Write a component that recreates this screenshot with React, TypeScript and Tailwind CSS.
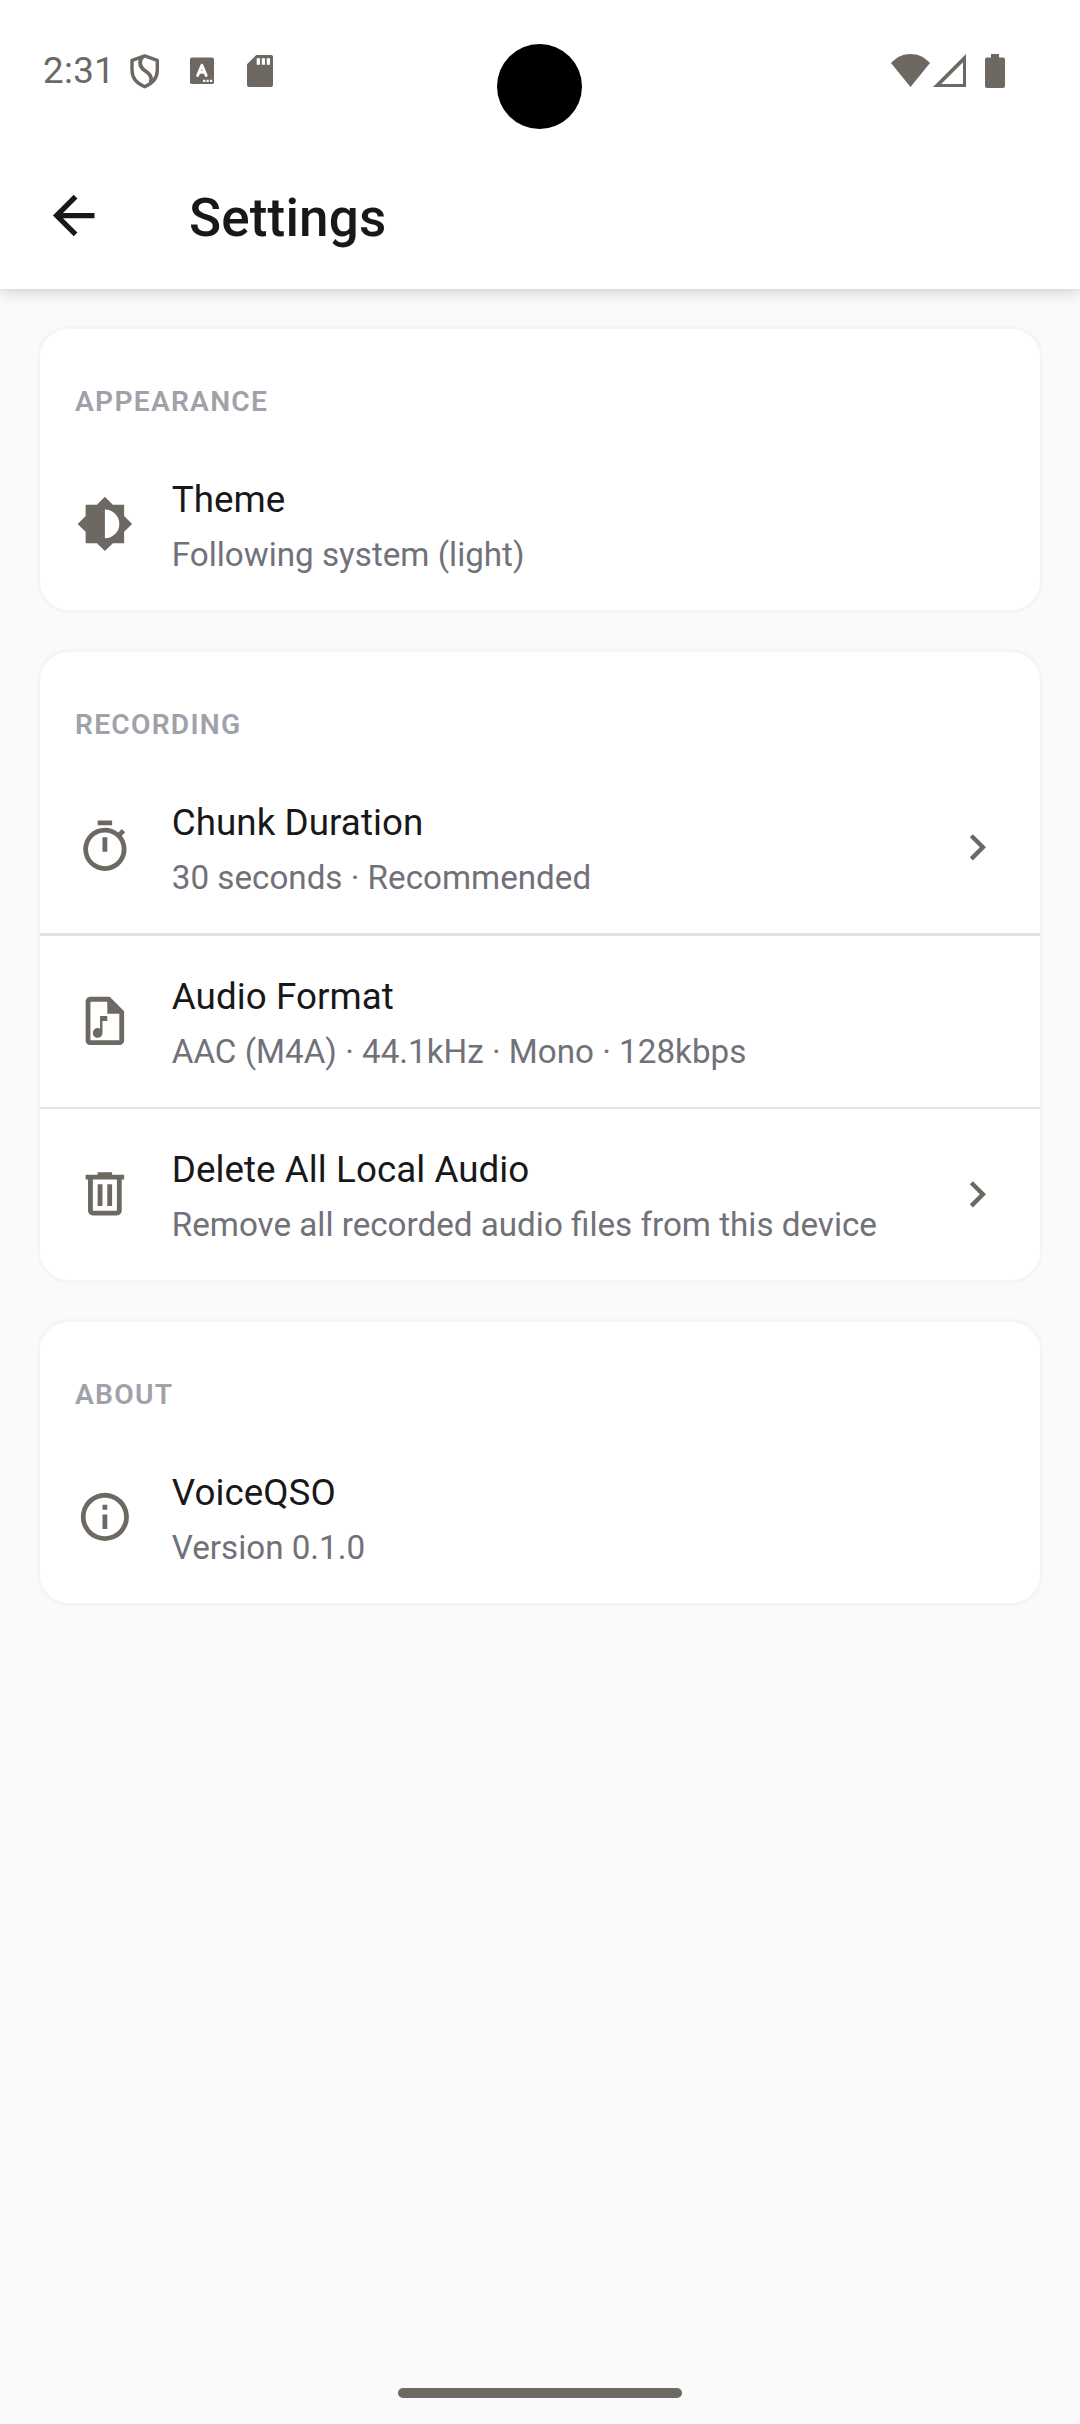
import type { ReactNode } from 'react'

const icons = {
  arrowLeft: 'M20,11V13H8L13.5,18.5L12.08,19.92L4.16,12L12.08,4.08L13.5,5.5L8,11H20Z',
  chevronRight: 'M8.59,16.58L13.17,12L8.59,7.41L10,6L16,12L10,18L8.59,16.58Z',
  brightness:
    'M12,18V6A6,6 0 0,1 18,12A6,6 0 0,1 12,18M20,15.31L23.31,12L20,8.69V4H15.31L12,0.69L8.69,4H4V8.69L0.69,12L4,15.31V20H8.69L12,23.31L15.31,20H20V15.31Z',
  timer:
    'M12,20A7,7 0 0,1 5,13A7,7 0 0,1 12,6A7,7 0 0,1 19,13A7,7 0 0,1 12,20M19.03,7.39L20.45,5.97C20,5.46 19.55,5 19.04,4.56L17.62,6C16.07,4.74 14.12,4 12,4A9,9 0 0,0 3,13A9,9 0 0,0 12,22C17,22 21,17.97 21,13C21,10.88 20.26,8.93 19.03,7.39M11,14H13V8H11M15,1H9V3H15V1Z',
  fileMusic:
    'M14 2H6C4.89 2 4 2.9 4 4V20C4 21.11 4.89 22 6 22H18C19.11 22 20 21.11 20 20V8L14 2M18 20H6V4H13V9H18V20M13 10V12H11V17C11 18.1 10.11 19 9 19C7.9 19 7 18.11 7 17C7 15.9 7.9 15 9 15C9.4 15 9.7 15.1 10 15.3V10H13Z',
  trash:
    'M9,3V4H4V6H5V19A2,2 0 0,0 7,21H17A2,2 0 0,0 19,19V6H20V4H15V3H9M7,6H17V19H7V6M9,8V17H11V8H9M13,8V17H15V8H13Z',
  info: 'M11,9H13V7H11M12,20C7.59,20 4,16.41 4,12C4,7.59 7.59,4 12,4C16.41,4 20,7.59 20,12C20,16.41 16.41,20 12,20M12,2A10,10 0 0,0 2,12A10,10 0 0,0 12,22A10,10 0 0,0 22,12A10,10 0 0,0 12,2M11,17H13V11H11V17Z',
}

interface IconProps {
  name: keyof typeof icons
  className: string
}

function Icon({ name, className }: IconProps) {
  return (
    <svg viewBox="0 0 24 24" fill="currentColor" className={className} aria-hidden="true">
      <path d={icons[name]} />
    </svg>
  )
}

function StatusBar() {
  return (
    <div className="relative flex h-[142px] items-start justify-between pt-[54px] pr-[75px] pl-[43px] text-[#6e6862]">
      <div className="flex items-start">
        <span className="w-[87px] text-[36.75px] leading-[34px] font-[370] tracking-[0.3px]">2:31</span>
        <svg viewBox="0 0 30 35" className="h-[35px] w-[30px]" fill="none" stroke="currentColor" strokeWidth="3.4">
          <path d="M14.7 1.9L27.3 6.3V16C27.3 24 22.5 29.6 14.7 32.8C6.9 29.6 2 24 2 16V6.3Z" strokeLinejoin="round" />
          <path d="M12.5 3C8.8 7 9.7 12.5 13.8 15.8C19 19.5 22.8 22.5 20.5 28.5" strokeWidth="3.8" />
        </svg>
        <svg viewBox="0 0 24 27" className="mt-[3px] ml-[30px] h-[27px] w-[24px]">
          <rect y="0.5" width="24" height="26.5" rx="1.8" fill="currentColor" />
          <path
            d="M7.6 18.5L11.9 8.2L16.2 18.5M9 15.2H14.8"
            fill="none"
            stroke="white"
            strokeWidth="2.9"
            strokeLinecap="round"
            strokeLinejoin="round"
          />
          <path d="M13 22.8H15.4V25H13ZM16.6 22.8H18.8V25H16.6ZM20 22.8H22.2V25H20Z" fill="white" />
        </svg>
        <svg viewBox="0 0 26 33" className="ml-[33px] h-[33px] w-[26px]">
          <path d="M9.3 1H24A2 2 0 0 1 26 3V31A2 2 0 0 1 24 33H2A2 2 0 0 1 0 31V10.3Z" fill="currentColor" />
          <path d="M9.7 4.2H13V10.8H9.7ZM14.8 4.2H18V10.8H14.8ZM19.7 4.2H23V10.8H19.7Z" fill="white" />
        </svg>
      </div>
      <div className="absolute top-[44px] left-[497px] size-[85px] rounded-full bg-black" />
      <div className="flex items-start">
        <svg viewBox="0 0 39 33" className="h-[33px] w-[39px]" fill="currentColor">
          <path d="M19.5 33L0 9C5.5 3.2 12 0 19.5 0C27 0 33.5 3.2 39 9Z" />
        </svg>
        <svg viewBox="0 0 33 33" className="ml-[3px] h-[33px] w-[33px]" fill="currentColor" fillRule="evenodd">
          <path d="M33 0V33H0ZM30 8.2L8.2 29.9H30Z" />
        </svg>
        <svg viewBox="0 0 20 34" className="ml-[19px] h-[34px] w-[20px]" fill="currentColor">
          <path d="M6 0H14V3.5H18A2 2 0 0 1 20 5.5V32A2 2 0 0 1 18 34H2A2 2 0 0 1 0 32V5.5A2 2 0 0 1 2 3.5H6Z" />
        </svg>
      </div>
    </div>
  )
}

interface SectionProps {
  title: string
  children: ReactNode
}

function Section({ title, children }: SectionProps) {
  return (
    <section className="overflow-hidden rounded-[32px] border-3 border-[#f5f5f5] bg-white">
      <h2 className="h-[109.3px] px-[35px] pt-[54px] text-[28.2px] leading-[38px] font-semibold tracking-[1.25px] text-[#a1a1aa]">
        {title}
      </h2>
      {children}
    </section>
  )
}

interface RowProps {
  icon: keyof typeof icons
  title: string
  description: string
  chevron?: boolean
}

function Row({ icon, title, description, chevron }: RowProps) {
  return (
    <div className="flex h-[171px] items-center pr-[37px] pl-[36px]">
      <Icon name={icon} className="size-[57.75px] shrink-0 text-[#6e6862]" />
      <div className="ml-[38px] flex-1 pt-[6px]">
        <p className="text-[36.75px] leading-[55px] font-[370] tracking-[0.06px] text-[#18181b]">{title}</p>
        <p className="text-[33.2px] leading-[55px] font-[370] text-[#71717a]">{description}</p>
      </div>
      {chevron && <Icon name="chevronRight" className="size-[52.5px] shrink-0 text-[#6e6862]" />}
    </div>
  )
}

export default function App() {
  return (
    <div className="flex h-[2424px] w-[1080px] flex-col bg-[#fafafa] font-['Roboto',sans-serif]">
      <header className="relative h-[289px] bg-white shadow-[0_5px_12px_rgba(0,0,0,0.13),0_1px_2px_rgba(0,0,0,0.05)]">
        <StatusBar />
        <div className="flex h-[147px] items-center px-[42px]">
          <Icon name="arrowLeft" className="size-[63px] text-[#18181b]" />
          <h1 className="ml-[84px] pt-[5px] text-[53px] leading-[64px] font-medium tracking-[0.15px] text-[#18181b]">
            Settings
          </h1>
        </div>
      </header>

      <main className="flex flex-1 flex-col gap-[36.75px] px-[37px] pt-[37.3px]">
        <Section title="APPEARANCE">
          <Row icon="brightness" title="Theme" description="Following system (light)" />
        </Section>
        <Section title="RECORDING">
          <Row icon="timer" title="Chunk Duration" description="30 seconds · Recommended" chevron />
          <div className="h-[3px] bg-[#e4e4e4]" />
          <Row icon="fileMusic" title="Audio Format" description="AAC (M4A) · 44.1kHz · Mono · 128kbps" />
          <div className="h-[2px] bg-[#e4e4e4]" />
          <Row icon="trash" title="Delete All Local Audio" description="Remove all recorded audio files from this device" chevron />
        </Section>
        <Section title="ABOUT">
          <Row icon="info" title="VoiceQSO" description="Version 0.1.0" />
        </Section>
      </main>

      <div className="mb-[26px] h-[10px] w-[284px] self-center rounded-full bg-[#6e6862]" />
    </div>
  )
}
